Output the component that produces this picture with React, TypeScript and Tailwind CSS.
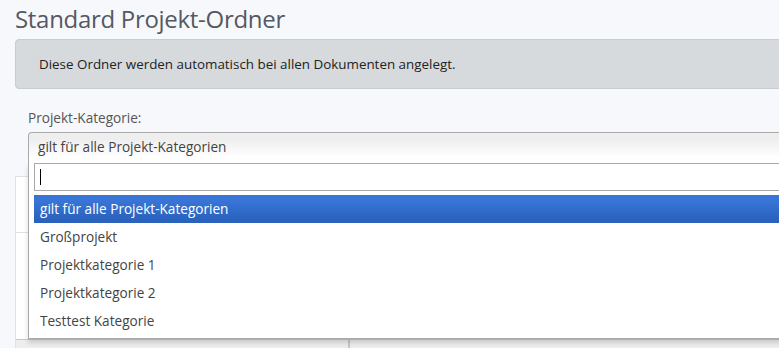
import { useState } from 'react';

const categories = [
  'gilt für alle Projekt-Kategorien',
  'Großprojekt',
  'Projektkategorie 1',
  'Projektkategorie 2',
  'Testtest Kategorie',
];

const App = () => {
  const [selected] = useState(0);

  return (
    <div className="h-[348px] w-[779px] overflow-hidden bg-[#f7f8fb] font-['Open_Sans','Noto_Sans',sans-serif] text-[#333]">
      <div className="w-[1000px] pl-[15px]">
        {/* Page title */}
        <h1 className="pt-[1px] text-[24px] leading-[36px] font-normal tracking-[-0.3px] text-[#555962]">Standard Projekt-Ordner</h1>

        {/* Info alert */}
        <div className="mt-[2px] h-[50px] rounded-[4px] border border-[#c6cdd1] bg-[#d6dadd] pl-[23px] flex items-center text-[13.4px] text-[#222]">
          Diese Ordner werden automatisch bei allen Dokumenten angelegt.
        </div>

        {/* Category select */}
        <div className="relative mt-[20px] pl-[13px]">
          <label className="block text-[13.6px] leading-[18px] text-[#555]">Projekt-Kategorie:</label>
          <div className="relative mt-[5px]">
            <div className="h-[31px] rounded-t-[4px] border border-b-0 border-[#aaa] bg-gradient-to-b from-[#eee] from-20% to-white to-80% pl-[9px] pt-[5px] text-[13.6px] leading-[18px] text-[#444]">
              {categories[selected]}
            </div>

            {/* Open dropdown */}
            <div className="absolute left-0 top-[31px] z-10 w-[900px] border border-t-0 border-[#aaa] bg-white shadow-[0_4px_5px_rgba(0,0,0,0.15)]">
              <div className="px-[5px] pt-0">
                <div className="relative h-[28px] border border-[#aaa] bg-white">
                  <span className="absolute left-[5px] top-[5px] h-[16px] w-px bg-black"></span>
                </div>
              </div>
              <ul className="mx-[5px] mt-[4px] mb-[3px] text-[13.6px] text-[#444]">
                {categories.map((c, i) => (
                  <li
                    key={c}
                    className={
                      i === selected
                        ? 'h-[28px] flex items-center pl-[6px] text-white bg-gradient-to-b from-[#3875d7] from-20% to-[#2a62bc] to-90%'
                        : 'h-[28px] flex items-center pl-[6px]'
                    }
                  >
                    {c}
                  </li>
                ))}
              </ul>
            </div>
          </div>
        </div>

        {/* Folder panel behind the dropdown */}
        <div className="mt-[13px] h-[200px] border-l border-t border-[#dee2e6] bg-white">
          <div className="h-[56px] border-b border-[#dee2e6]"></div>
          <div className="flex h-[106px]">
            <div className="w-[334px]"></div>
            <div className="flex-1 pt-[86px] pl-[58px] flex items-start gap-[5px] text-[13.6px] text-[#333]">
              <svg width="16" height="14" viewBox="0 0 16 14" className="mt-[2px]">
                <path d="M1 2.5h5l1.5 1.5H15v9H1z" fill="none" stroke="#333" strokeWidth="1.2" />
              </svg>
              <span>Vorlagen</span>
            </div>
          </div>
          <div className="flex h-[40px] border-t border-[#c8c8c8] bg-[#eee]">
            <div className="w-[334px] border-r-2 border-[#c8c8c8]"></div>
          </div>
        </div>
      </div>
    </div>
  );
};

export default App;
